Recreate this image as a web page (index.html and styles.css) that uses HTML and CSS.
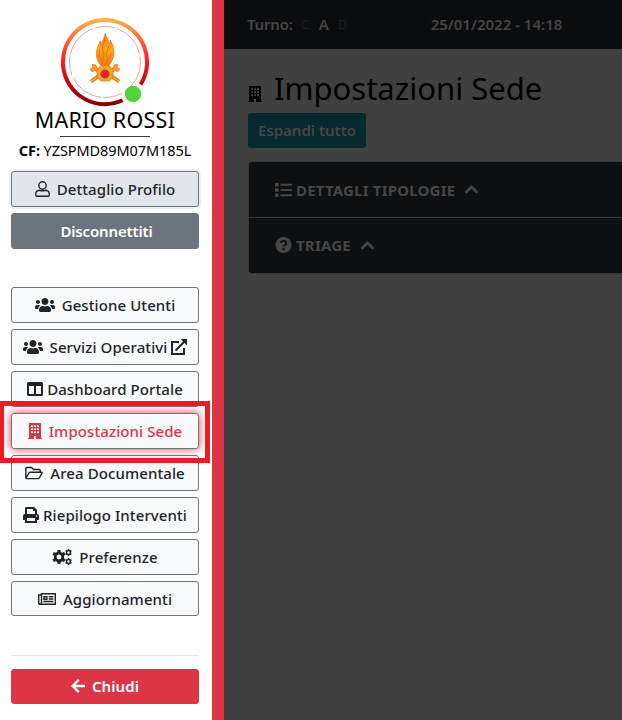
FILE: index.html
```html
<!DOCTYPE html>
<html lang="it">
<head>
<meta charset="utf-8">
<title>Impostazioni Sede</title>
<link rel="stylesheet" href="styles.css">
</head>
<body>
<svg class="defs" width="0" height="0">
  <symbol id="users" viewBox="0 0 640 512"><path d="M96 224c35.300 0 64-28.700 64-64s-28.700-64-64-64-64 28.700-64 64 28.700 64 64 64zm448 0c35.300 0 64-28.700 64-64s-28.700-64-64-64-64 28.700-64 64 28.700 64 64 64zm32 32h-64c-17.600 0-33.500 7.100-45.100 18.600 40.300 22.100 68.900 62 75.100 109.400h66c17.700 0 32-14.300 32-32v-32c0-35.300-28.700-64-64-64zm-256 0c61.900 0 112-50.100 112-112S381.900 32 320 32 208 82.100 208 144s50.100 112 112 112zm76.800 32h-8.300c-20.800 10-43.900 16-68.500 16s-47.600-6-68.500-16h-8.300C179.600 288 128 339.600 128 403.200V432c0 26.500 21.500 48 48 48h288c26.500 0 48-21.500 48-48v-28.800c0-63.600-51.600-115.200-115.200-115.200zm-223.700-13.400C161.500 263.100 145.600 256 128 256H64c-35.300 0-64 28.700-64 64v32c0 17.700 14.300 32 32 32h65.900c6.300-47.400 34.900-87.300 75.200-109.400z"/></symbol>
  <symbol id="building" viewBox="0 0 14 16"><path fill-rule="evenodd" d="M1 .5Q1 0 1.500 0h11q.5 0 .5.500V15h1v1H8v-3H6v3H0v-1h1zM3 2.200v1.700h2V2.200zM6 2.200v1.700h2V2.200zM9 2.200v1.700h2V2.200zM3 5.200v1.700h2V5.200zM6 5.200v1.700h2V5.200zM9 5.200v1.700h2V5.200zM3 8.200v1.700h2V8.200zM6 8.200v1.700h2V8.200zM9 8.200v1.700h2V8.200z"/></symbol>
  <symbol id="gear" viewBox="-8 -8 16 16"><path fill-rule="evenodd" d="M-1.600-8h3.200l.5 2.200 1.500.9 2.200-.7 1.600 2.800-1.700 1.500v2.600l1.700 1.500-1.600 2.800-2.200-.7-1.500.9-.5 2.200h-3.200l-.5-2.200-1.500-.9-2.200.7-1.600-2.800 1.700-1.500v-2.600l-1.700-1.500 1.600-2.800 2.200.7 1.500-.9zM0-2.800a2.800 2.800 0 1 0 0 5.600 2.800 2.800 0 1 0 0-5.600z"/></symbol>
  <symbol id="chevron" viewBox="0 0 14 9"><path d="M1 7.700 7 1.900l6 5.800" fill="none" stroke="currentColor" stroke-width="2.700"/></symbol>
</svg>

<div class="app">
  <aside class="sidebar">
    <header class="profile">
      <svg class="avatar" viewBox="0 0 90 90">
        <defs>
          <linearGradient id="ring" x1="0" y1="0" x2="0" y2="1"><stop offset="0" stop-color="#ffad4a"/><stop offset=".48" stop-color="#ff1c20"/><stop offset=".8" stop-color="#bd0008"/><stop offset="1" stop-color="#850000"/></linearGradient>
          <linearGradient id="fire" x1="0" y1="0" x2="0" y2="1"><stop offset="0" stop-color="#ef7418"/><stop offset=".5" stop-color="#ffaa12"/><stop offset="1" stop-color="#ef7812"/></linearGradient>
        </defs>
        <path d="M80.600 67.500A42.100 42.100 0 1 0 62.600 83.300" fill="none" stroke="url(#ring)" stroke-width="4"/>
        <circle cx="45" cy="45" r="35.600" fill="none" stroke="#e48b80" stroke-width=".8" stroke-dasharray="35 3 20 2"/>
        <g stroke="#e26a20" stroke-width=".7">
          <path d="M45.300 16c1 5 3.400 7 4 11 1-1.300 1-2.500.7-4 3.200 4.700 4.500 10 3.700 15-.5 4.500-3 8-5.500 11.300h-6.500c-3.300-3.300-5.500-7.500-5.300-12.500.2-5 2-9 4-12.800l.3 3.500c2-4 4-7 4.600-11.500z" fill="url(#fire)"/>
          <path d="m31 64.500 9-6.500M59 64.500 50 58" stroke="#e26a20" stroke-width="3.600"/>
          <path d="m31 64.500 9-6.500M59 64.500 50 58" stroke="#f9a722" stroke-width="2"/>
          <path d="m38.500 56-3.700-2.500-2.500 1.300-2.300-2.600 3-1.400-.8-3.300 3.600.4 1 2.900 4.200 2.200zM51.500 56l3.700-2.500 2.500 1.300 2.300-2.600-3-1.400.8-3.300-3.600.4-1 2.900-4.200 2.200z" fill="#f7a21d"/>
          <path d="M41 48.500h8l4 4v8l-4 3.500h-8l-4-3.500v-8z" fill="#f6a51d"/>
        </g>
        <path d="m45.300 21-3.300 10 2 7-2 8M49 29l-3 8 2 4-2 7M39.800 33l-.6 5 2.500 6M51.500 36l-2 7" fill="none" stroke="#e26a16" stroke-width=".9"/>
        <circle cx="45" cy="57" r="4.300" fill="#d52237" stroke="#c75b25" stroke-width=".7"/>
        <circle cx="73" cy="77" r="8.200" fill="#4fd43b"/>
      </svg>
      <h2 class="name">MARIO ROSSI</h2>
      <p class="cf"><b>CF:</b> YZSPMD89M07M185L</p>
    </header>

    <div class="account">
      <button class="btn detail"><svg class="i15" viewBox="0 0 15 16" fill="none" stroke="currentColor" stroke-width="1.400"><circle cx="7.500" cy="4.500" r="3.700"/><path d="M4.500 9.300C2 9.500.8 11 .8 13v1.200q0 1 1 1h11.400q1 0 1-1V13c0-2-1.200-3.500-3.700-3.700q-3 1-6 0z"/></svg><span>Dettaglio Profilo</span></button>
      <button class="btn logout"><span>Disconnettiti</span></button>
    </div>

    <nav class="menu">
      <button class="btn gestione"><svg class="i20"><use href="#users"/></svg><span>Gestione Utenti</span></button>
      <button class="btn servizi"><svg class="i20"><use href="#users"/></svg><span>Servizi Operativi</span><svg class="i16" viewBox="0 0 16 16" fill="none" stroke="currentColor"><path d="M8 3H1v12h12V9M4.500 11.500l9-9" stroke-width="2"/><path d="M9.500 0H16v6.500z" fill="currentColor" stroke="none"/></svg></button>
      <button class="btn dashboard"><svg class="i16" viewBox="0 0 16 16"><path fill-rule="evenodd" d="M1.500 1h13Q16 1 16 2.500v11q0 1.500-1.500 1.500h-13Q0 15 0 13.500v-11Q0 1 1.500 1zM2 5v8h5V5zM9 5v8h5V5z"/></svg><span>Dashboard Portale</span></button>
      <button class="btn active"><svg class="i14"><use href="#building"/></svg><span>Impostazioni Sede</span></button>
      <button class="btn area"><svg class="i18" viewBox="0 0 18 16" fill="none" stroke="currentColor" stroke-width="1.400"><path d="M.8 12.800V3.500q0-1 1-1h4.700l2 2h5.700q1 0 1 1v2M1 13l3-5.100q.3-.6 1-.6h11.600q.8 0 .4.800l-2.800 4.900q-.3.600-1 .6H1.400q-.7 0-.4-.6z"/></svg><span>Area Documentale</span></button>
      <button class="btn riepilogo"><svg class="i16" viewBox="0 0 16 16"><path fill-rule="evenodd" d="M2 7V1.200Q2 0 3.200 0H11l3 3v4q2 0 2 2v4h-2v3H2v-3H0V9q0-2 2-2zM4 2v5h8V4H10V2zM4 11v3h8v-3zM13.500 8.200a.8.800 0 1 0 0 1.600.8.800 0 1 0 0-1.600z"/></svg><span>Riepilogo Interventi</span></button>
      <button class="btn preferenze"><svg class="i20" viewBox="0 0 20 16"><use href="#gear" x="0" y="1" width="14" height="14"/><use href="#gear" x="13" y="0" width="7" height="7"/><use href="#gear" x="13" y="9" width="7" height="7"/></svg><span>Preferenze</span></button>
      <button class="btn aggiorna"><svg class="i18" viewBox="0 0 18 16" fill="none" stroke="currentColor" stroke-width="1.400"><path d="M3.500 12V2.700h13.800v10.600H2.200q-1.500 0-1.500-1.500V4h2.500M3.300 12q0 1.300-1.100 1.300M10.800 5.700h4.500M10.800 8h4.500M5.300 10.500h10"/><path d="M5.900 5.700h3v2.500h-3z"/></svg><span>Aggiornamenti</span></button>
      <div class="marker"></div>
    </nav>

    <footer class="close">
      <button class="btn chiudi"><svg class="i14" viewBox="0 0 14 16" fill="none" stroke="currentColor" stroke-width="2.400"><path d="M7.800 1.800 1.700 8l6.100 6.200M2 8h12"/></svg><span>Chiudi</span></button>
    </footer>
  </aside>

  <main class="page">
    <div class="topbar"><b class="turno">Turno:</b><span class="off">C</span><b class="on">A</b><span class="off">D</span><b class="date">25/01/2022 - 14:18</b></div>
    <div class="content">
      <div class="heading"><svg class="i14"><use href="#building"/></svg><h1>Impostazioni Sede</h1></div>
      <button class="expand"><span>Espandi tutto</span></button>
      <div class="accordion">
        <div class="row"><svg class="i17" viewBox="0 0 17 16" fill="currentColor"><path d="M0 1h3.500v3.500H0zM0 6.200h3.500v3.500H0zM0 11.400h3.500v3.500H0zM5.500 1.800h11.500v2H5.500zM5.500 7h11.500v2H5.500zM5.500 12.200h11.500v2H5.500z"/></svg><b>DETTAGLI TIPOLOGIE</b><svg class="chev"><use href="#chevron"/></svg></div>
        <div class="row"><svg class="i17" viewBox="0 0 16 16"><circle cx="8" cy="8" r="8"/><path d="M5.400 6C5.700 4.500 6.600 3.900 8 3.900c1.600 0 2.700.9 2.700 2.200 0 1.900-2.500 1.800-2.500 3.500" fill="none" stroke="#0d0f11" stroke-width="1.800"/><circle cx="8.100" cy="12" r="1.200" fill="#0d0f11"/></svg><b>TRIAGE</b><svg class="chev"><use href="#chevron"/></svg></div>
      </div>
    </div>
  </main>
</div>
</body>
</html>
```

FILE: styles.css
```css
* { box-sizing: border-box; }
body { margin: 0; font-family: "Noto Sans", "Open Sans", sans-serif; font-size: 15px; color: #212529; overflow: hidden; }
.defs { position: absolute; }
svg { display: block; flex: none; fill: currentColor; }
svg[fill="none"] { fill: none; }
.app { display: flex; width: 622px; height: 720px; }

.sidebar { width: 224px; flex: none; border-right: 12px solid #dc3545; background: #fff; padding: 17px 13px 0 11px; display: flex; flex-direction: column; }
.profile { height: 154px; display: flex; flex-direction: column; align-items: center; color: #000; }
.avatar { width: 90px; height: 90px; }
.name { margin: -1px 0 0; height: 30px; width: 90px; font-size: 21.500px; line-height: 28px; font-weight: 400; letter-spacing: .3px; white-space: nowrap; display: flex; justify-content: center; border-bottom: 1px solid #2c3e50; height: 31px; }
.cf { margin: 3px -5px 0; font-size: 14.500px; line-height: 20px; white-space: nowrap; letter-spacing: -.08px; }

.btn { width: 188px; height: 36px; flex: none; padding: 0; display: flex; align-items: center; justify-content: center; gap: 7px; border: 1px solid #6c757d; border-radius: 3px; background: #f8f9fa; color: #212529; font: 500 15px/22px "Noto Sans", sans-serif; letter-spacing: .09px; white-space: nowrap; }
.account, .menu { display: flex; flex-direction: column; gap: 6px; }
.menu { margin-top: 38px; position: relative; }
.detail { background: #e2e6ea; box-shadow: 0 0 0 2px #eeefef; }
.logout { background: #6c757d; color: #fff; font-weight: 600; letter-spacing: -.15px; padding-left: 3px; }
.servizi, .dashboard, .riepilogo { gap: 4px; }
.servizi span { margin-left: 3px; }
.active { color: #dc3545; box-shadow: 0 0 10px #dc3545; position: relative; }
.aggiorna { height: 35px; }
.marker { position: absolute; left: -11px; top: 114px; width: 210px; height: 62px; border: 5px solid #ed1c24; border-left-width: 4px; }
.close { margin-top: 39px; padding-top: 13px; border-top: 1px solid #e5e5e5; }
.chiudi { height: 35px; padding-bottom: 1px; background: #dc3545; border-color: #dc3545; color: #fff; font-weight: 600; }

.i14 { width: 14px; height: 16px; }
.i15 { width: 15px; height: 16px; }
.i16 { width: 16px; height: 16px; }
.i17 { width: 17px; height: 16px; }
.i18 { width: 18px; height: 16px; }
.i20 { width: 20px; height: 16px; }

.page { flex: 1; background: #404040; min-width: 0; }
.topbar { height: 49px; background: #0b0c0e; color: #454545; display: flex; align-items: center; padding: 0 0 2px 23px; white-space: nowrap; }
.topbar b { font-weight: 600; }
.turno { letter-spacing: -.2px; }
.off { color: #1d1e20; font-size: 13px; width: 10px; margin: 0 8px; }
.on { width: 11px; }
.date { margin-left: 75px; }
.content { padding: 22px 0 0 24px; }
.heading { height: 42px; display: flex; align-items: flex-start; gap: 12px; color: #000; }
.heading svg { margin-top: 15px; }
h1 { margin: -4px 0 0; font-size: 31px; line-height: 42px; font-weight: 400; white-space: nowrap; }
.expand { display: flex; align-items: center; justify-content: center; padding: 0 0 1px; width: 118px; height: 35px; border: 0; border-radius: 3px; background: #06292d; color: #454545; font: 600 15px "Noto Sans", sans-serif; white-space: nowrap; }
.accordion { margin-top: 13px; height: 113px; border: 1px solid #383838; border-right: 0; border-radius: 4px 0 0 4px; background: #0d0f11; color: #464646; overflow: hidden; }
.row { height: 55px; padding-left: 26px; display: flex; align-items: center; gap: 4px; white-space: nowrap; }
.row + .row { border-top: 1px solid #383838; }
.row b { font-weight: 700; letter-spacing: .2px; }
.chev { width: 15px; height: 9px; margin-left: 5px; }
```
